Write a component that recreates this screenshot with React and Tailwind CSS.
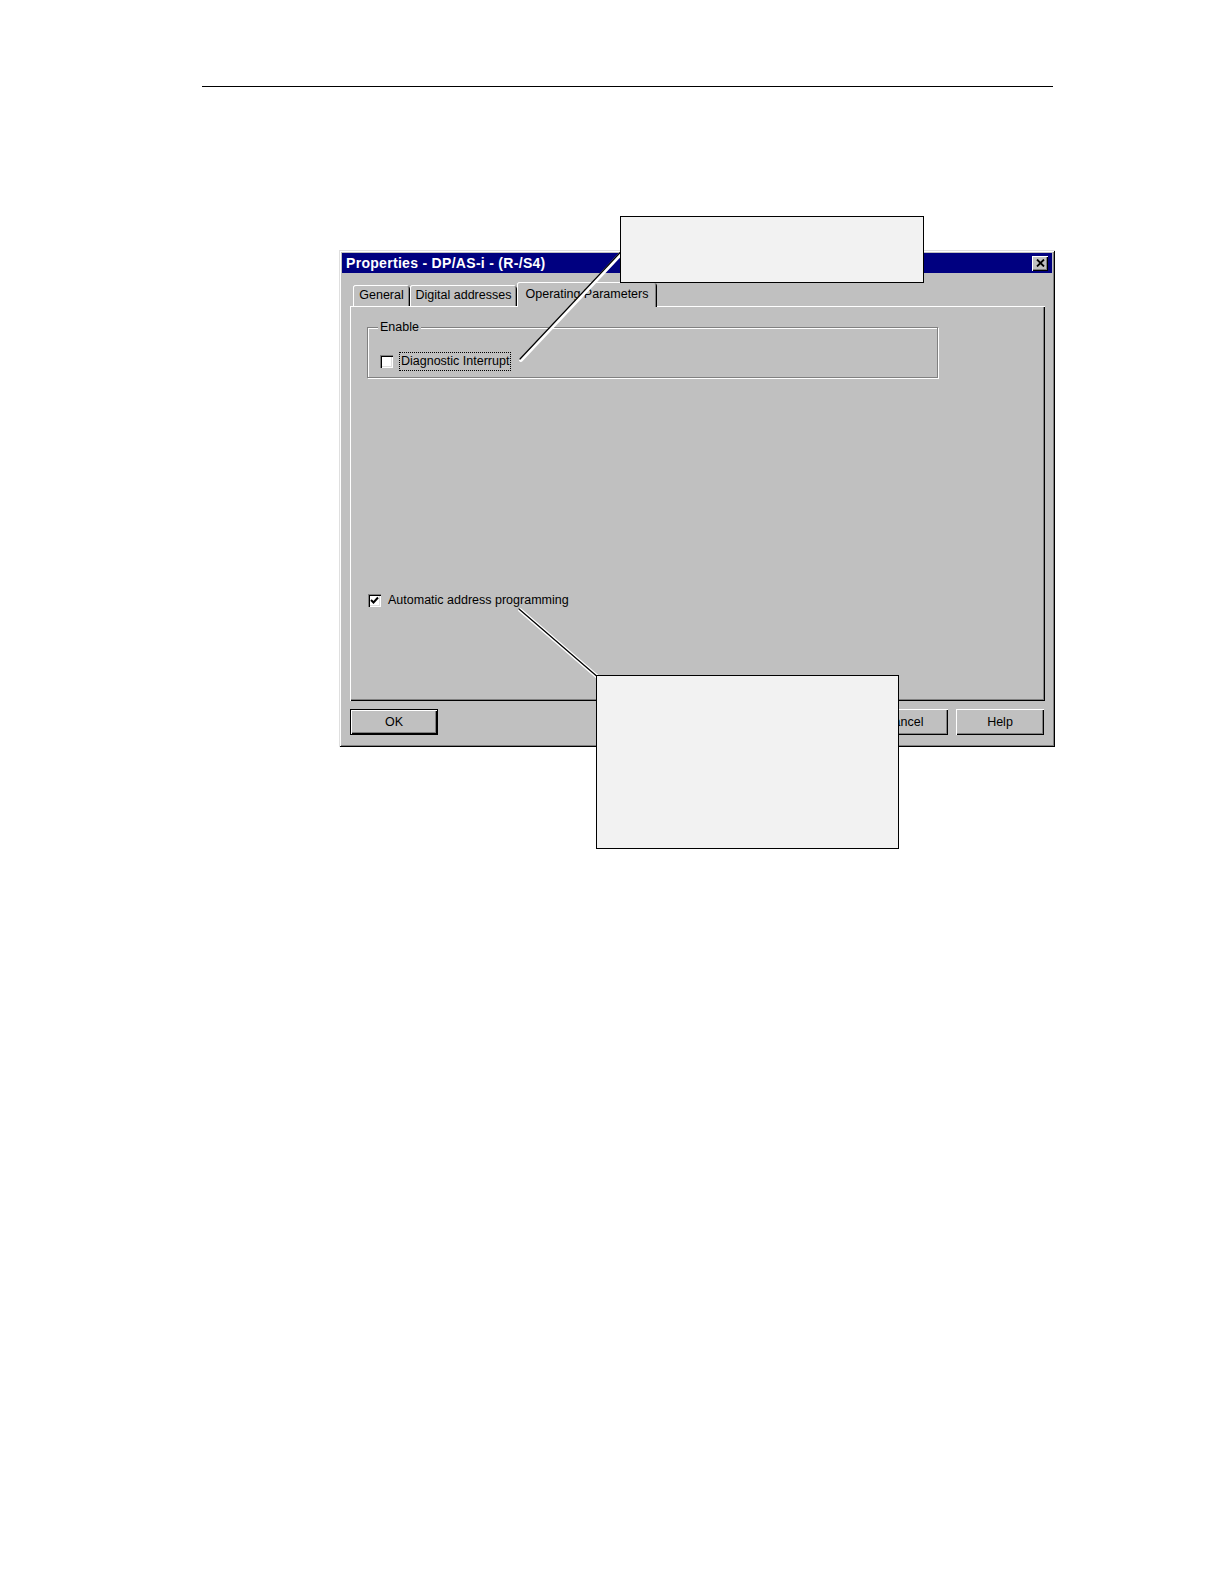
const FACE = 'bg-[#c0c0c0]'

function Checkbox({ checked }) {
  return (
    <div className="w-[13px] h-[13px] bg-white shrink-0 flex items-center justify-center shadow-[inset_1px_1px_0_#808080,inset_2px_2px_0_#000,inset_-1px_-1px_0_#fff,inset_-2px_-2px_0_#dfdfdf]">
      {checked && (
        <svg width="9" height="9" viewBox="0 0 9 9">
          <path d="M1 4 L3.5 6.5 L8 1.5" fill="none" stroke="#000" strokeWidth="2" />
        </svg>
      )}
    </div>
  )
}

function Button({ label, isDefault }) {
  return (
    <div
      className={`w-[88px] h-[26px] flex items-center justify-center text-[12.5px] text-black ${FACE} ${
        isDefault
          ? 'border border-black shadow-[inset_1px_1px_0_#fff,inset_-1px_-1px_0_#000,inset_-2px_-2px_0_#808080]'
          : 'shadow-[inset_1px_1px_0_#fff,inset_-1px_-1px_0_#000,inset_-2px_-2px_0_#808080]'
      }`}
    >
      {label}
    </div>
  )
}

function Tab({ label, width, active }) {
  return (
    <div
      style={{ width }}
      className={`flex justify-center text-[12.5px] text-black rounded-t-[3px] ${FACE} shadow-[inset_1px_0_0_#fff,inset_0_1px_0_#fff,inset_-1px_0_0_#000,inset_-2px_0_0_#808080] ${
        active ? 'h-[25px] -mb-px relative z-10 pt-[3px]' : 'h-[21px] items-center'
      }`}
    >
      {label}
    </div>
  )
}

function Dialog() {
  return (
    <div className={`w-[716px] h-[497px] ${FACE} p-[3px] flex flex-col shadow-[inset_1px_1px_0_#dfdfdf,inset_-1px_-1px_0_#000,inset_2px_2px_0_#fff,inset_-2px_-2px_0_#808080]`}>
      {/* title bar */}
      <div className="h-[20px] bg-[#000080] flex items-center justify-between pl-[4px] pr-[4px]">
        <span className="text-white font-bold text-[14px] tracking-[0.3px] leading-none">
          Properties - DP/AS-i - (R-/S4)
        </span>
        <div className={`w-[16px] h-[15px] ${FACE} flex items-center justify-center shadow-[inset_1px_1px_0_#fff,inset_-1px_-1px_0_#000,inset_-2px_-2px_0_#808080]`}>
          <svg width="9" height="8" viewBox="0 0 9 8">
            <path d="M1 0.5 L8 7.5 M8 0.5 L1 7.5" stroke="#000" strokeWidth="1.8" />
          </svg>
        </div>
      </div>

      {/* tabs */}
      <div className="mt-[9px] ml-[11px] h-[24px] flex items-end">
        <Tab label="General" width={57} />
        <Tab label="Digital addresses" width={107} />
        <Tab label="Operating Parameters" width={140} active />
      </div>

      {/* tab page */}
      <div className="ml-[8px] w-[695px] h-[395px] flex flex-col shadow-[inset_1px_1px_0_#fff,inset_-1px_-1px_0_#000,inset_-2px_-2px_0_#808080]">
        <div className="mt-[21px] ml-[17px] w-[571px] h-[51px] relative border border-[#808080] shadow-[inset_1px_1px_0_#fff,1px_1px_0_#fff]">
          <span className={`absolute -top-[10px] left-[10px] px-[2px] text-[12.5px] text-black ${FACE}`}>Enable</span>
          <div className="mt-[24px] ml-[12px] flex items-center">
            <Checkbox />
            <span className="ml-[6px] border border-dotted border-black px-[1px] h-[19px] flex items-center text-[12.5px] text-black">
              Diagnostic Interrupt
            </span>
          </div>
        </div>

        <div className="mt-[213px] ml-[18px] flex items-center">
          <Checkbox checked />
          <span className="ml-[7px] text-[12.5px] text-black">Automatic address programming</span>
        </div>
      </div>

      {/* buttons */}
      <div className="mt-[8px] ml-[8px] w-[694px] flex">
        <Button label="OK" isDefault />
        <div className="flex-1" />
        <Button label="Cancel" />
        <div className="w-[8px]" />
        <Button label="Help" />
      </div>
    </div>
  )
}

export default function App() {
  return (
    <div className="w-[1224px] h-[1584px] bg-white relative overflow-hidden font-['Liberation_Sans',Arial,sans-serif]">
      <div className="mt-[86px] ml-[202px] w-[851px] h-px bg-black" />

      <div className="mt-[163px] ml-[339px]">
        <Dialog />
      </div>

      {/* callout leader lines */}
      <svg className="absolute inset-0 z-20 pointer-events-none" width="1224" height="1584">
        <g strokeLinecap="round">
          <line x1="521" y1="360" x2="632" y2="242" stroke="#fff" strokeWidth="4" />
          <line x1="520" y1="359" x2="631" y2="241" stroke="#000" strokeWidth="1.3" />
          <line x1="520" y1="610" x2="608" y2="686" stroke="#fff" strokeWidth="4" />
          <line x1="519" y1="609" x2="607" y2="685" stroke="#000" strokeWidth="1.3" />
        </g>
      </svg>

      {/* callout boxes */}
      <div className="absolute z-30 left-[620px] top-[216px] w-[304px] h-[67px] bg-[#f2f2f2] border border-black" />
      <div className="absolute z-30 left-[596px] top-[675px] w-[303px] h-[174px] bg-[#f2f2f2] border border-black" />
    </div>
  )
}
